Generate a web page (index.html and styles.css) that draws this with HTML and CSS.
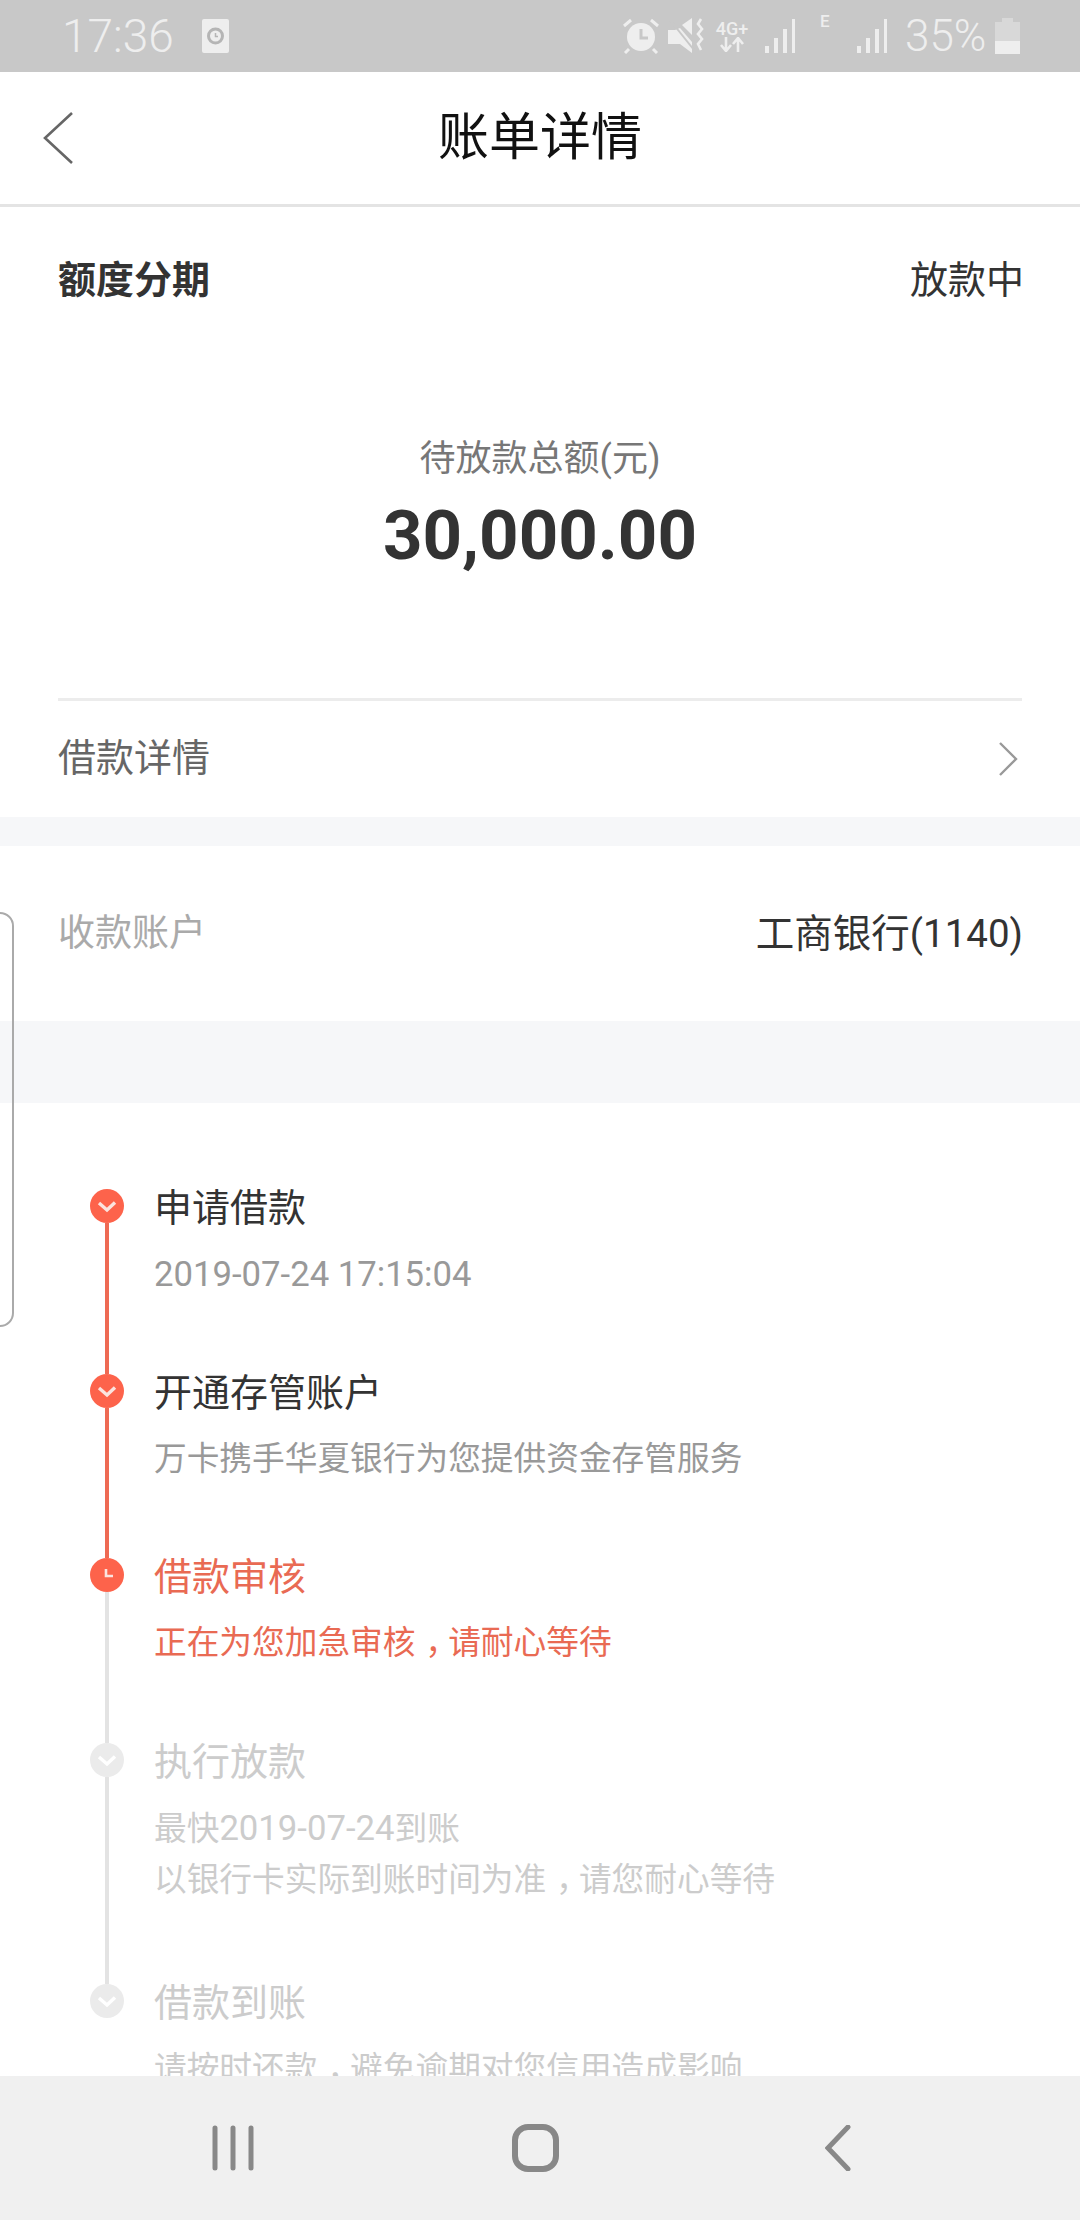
FILE: index.html
```html
<!DOCTYPE html>
<html lang="zh-CN">
<head>
    <meta charset="UTF-8">
    <meta name="viewport" content="width=device-width, initial-scale=1.0">
    <title>账单详情</title>
    <link rel="stylesheet" href="styles.css">
</head>
<body>
    <div class="app">
        <!-- Status bar -->
        <div class="status-bar">
            <div class="status-left">
                <span class="status-time">17:36</span>
                <svg class="status-note" width="27" height="34" viewBox="0 0 27 34">
                    <rect width="27" height="34" rx="2" fill="#eeeeee"/>
                    <circle cx="13.5" cy="17" r="7" fill="none" stroke="#b5b5b5" stroke-width="3"/>
                    <path d="M13.5 14v3.5h2.5" fill="none" stroke="#b5b5b5" stroke-width="1.5"/>
                </svg>
            </div>
            <div class="status-right">
                <svg class="icon-alarm" width="38" height="36" viewBox="0 0 38 36">
                    <circle cx="19" cy="19" r="14" fill="#eeeeee"/>
                    <path d="M19 11v9h7" fill="none" stroke="#c8c8c8" stroke-width="3"/>
                    <path d="M2 8l7-6M36 8l-7-6M7 31l-4 4M31 31l4 4" stroke="#eeeeee" stroke-width="3" fill="none"/>
                </svg>
                <svg class="icon-mute" width="37" height="36" viewBox="0 0 37 36">
                    <path d="M0 12h7l5-2 12 14v11l-12-9H0z" fill="#eeeeee"/>
                    <path d="M14 7l10-7v17z" fill="#eeeeee"/>
                    <path d="M2 2l24 30" stroke="#c8c8c8" stroke-width="2" fill="none"/>
                    <path d="M33 1l-3 5 4 5-4 5 4 5-4 5 3 6" stroke="#eeeeee" stroke-width="2.6" fill="none"/>
                </svg>
                <div class="icon-net">
                    <span class="net-label">4G+</span>
                    <svg width="24" height="15" viewBox="0 0 24 15">
                        <path d="M6 0v13M1 8l5 6 5-6M18 15V2M13 7l5-6 5 6" stroke="#eeeeee" stroke-width="2.6" fill="none"/>
                    </svg>
                </div>
                <svg class="icon-signal" width="32" height="34" viewBox="0 0 32 34">
                    <path d="M1 27h4v7H1zM10 19h4v15h-4zM19 10h4v24h-4zM28 0h3v34h-3z" fill="#eeeeee"/>
                </svg>
                <span class="net-e">E</span>
                <svg class="icon-signal" width="32" height="34" viewBox="0 0 32 34">
                    <path d="M1 27h4v7H1zM10 19h4v15h-4zM19 10h4v24h-4zM28 0h3v34h-3z" fill="#eeeeee"/>
                </svg>
                <span class="status-battery">35%</span>
                <svg class="icon-battery" width="25" height="36" viewBox="0 0 25 36">
                    <path d="M7 0h11v4h7v32H0V4h7z" fill="#d8d8d8"/>
                    <path d="M0 23h25v13H0z" fill="#eeeeee"/>
                </svg>
            </div>
        </div>

        <!-- Title bar -->
        <header class="title-bar">
            <svg class="back-icon" width="30" height="52" viewBox="0 0 30 52">
                <path d="M29 1L2 26l27 25" fill="none" stroke="#666666" stroke-width="2.6"/>
            </svg>
            <h1>账单详情</h1>
        </header>

        <main class="content">
            <section class="summary">
                <div class="summary-head">
                    <strong>额度分期</strong>
                    <span>放款中</span>
                </div>
                <p class="total-label">待放款总额(元)</p>
                <p class="total-amount">30,000.00</p>
                <div class="detail-link">
                    <span>借款详情</span>
                    <svg class="detail-arrow" width="20" height="34" viewBox="0 0 20 34">
                        <path d="M2 1l16 16L2 33" fill="none" stroke="#999999" stroke-width="2.4"/>
                    </svg>
                </div>
            </section>

            <section class="account">
                <span class="account-label">收款账户</span>
                <span class="account-value">工商银行(1140)</span>
            </section>

            <section class="timeline">
                <div class="step done">
                    <div class="rail">
                        <svg class="dot" width="34" height="34" viewBox="0 0 34 34">
                            <circle cx="17" cy="17" r="17" fill="#fd634b"/>
                            <path d="M9 14l8 7 8-7.500" fill="none" stroke="#fbe3de" stroke-width="3.400"/>
                        </svg>
                        <div class="rail-line"></div>
                    </div>
                    <div class="step-body">
                        <h3>申请借款</h3>
                        <p><span class="num">2019-07-24 17:15:04</span></p>
                    </div>
                </div>
                <div class="step done">
                    <div class="rail">
                        <svg class="dot" width="34" height="34" viewBox="0 0 34 34">
                            <circle cx="17" cy="17" r="17" fill="#fd634b"/>
                            <path d="M9 14l8 7 8-7.500" fill="none" stroke="#fbe3de" stroke-width="3.400"/>
                        </svg>
                        <div class="rail-line"></div>
                    </div>
                    <div class="step-body">
                        <h3>开通存管账户</h3>
                        <p>万卡携手华夏银行为您提供资金存管服务</p>
                    </div>
                </div>
                <div class="step current">
                    <div class="rail">
                        <svg class="dot" width="34" height="34" viewBox="0 0 34 34">
                            <circle cx="17" cy="17" r="17" fill="#fd634b"/>
                            <path d="M16 11v7h7" fill="none" stroke="#fbe3de" stroke-width="2.600"/>
                        </svg>
                        <div class="rail-line"></div>
                    </div>
                    <div class="step-body">
                        <h3>借款审核</h3>
                        <p>正在为您加急审核<span class="comma">，</span>请耐心等待</p>
                    </div>
                </div>
                <div class="step todo tall">
                    <div class="rail">
                        <svg class="dot" width="34" height="34" viewBox="0 0 34 34">
                            <circle cx="17" cy="17" r="17" fill="#ebebeb"/>
                            <path d="M9 14l8 7 8-7.500" fill="none" stroke="#ffffff" stroke-width="3.400"/>
                        </svg>
                        <div class="rail-line"></div>
                    </div>
                    <div class="step-body">
                        <h3>执行放款</h3>
                        <p>最快<span class="num">2019-07-24</span>到账<br>以银行卡实际到账时间为准<span class="comma">，</span>请您耐心等待</p>
                    </div>
                </div>
                <div class="step todo">
                    <div class="rail">
                        <svg class="dot" width="34" height="34" viewBox="0 0 34 34">
                            <circle cx="17" cy="17" r="17" fill="#ebebeb"/>
                            <path d="M9 14l8 7 8-7.500" fill="none" stroke="#ffffff" stroke-width="3.400"/>
                        </svg>
                    </div>
                    <div class="step-body">
                        <h3>借款到账</h3>
                        <p>请按时还款<span class="comma">，</span>避免逾期对您信用造成影响</p>
                    </div>
                </div>
            </section>
        </main>

        <!-- Android navigation bar -->
        <nav class="nav-bar">
            <svg width="42" height="46" viewBox="0 0 42 46">
                <path d="M3 3v40M21 3v40M39 3v40" stroke="#888888" stroke-width="5" stroke-linecap="round" fill="none"/>
            </svg>
            <div class="nav-home"></div>
            <svg width="26" height="46" viewBox="0 0 26 46">
                <path d="M23 2L3 23l20 21" fill="none" stroke="#888888" stroke-width="5" stroke-linecap="round"/>
            </svg>
        </nav>

        <!-- Edge tab floating over the page -->
        <div class="edge-tab"></div>
    </div>
</body>
</html>
```

FILE: styles.css
```css
/* Basic Reset */
* {
    margin: 0;
    padding: 0;
    box-sizing: border-box;
}

body {
    font-family: Roboto, "Noto Sans CJK SC", sans-serif;
    background-color: #ffffff;
}

.app {
    position: relative;
    display: flex;
    flex-direction: column;
    width: 1080px;
    height: 2220px;
    overflow: hidden;
}

/* Status bar */
.status-bar {
    display: flex;
    justify-content: space-between;
    align-items: center;
    flex: none;
    height: 72px;
    padding: 0 60px 0 62px;
    background: #c8c8c8;
    color: #eeeeee;
}

.status-left,
.status-right {
    display: flex;
    align-items: center;
}

.status-time {
    font-size: 46px;
    font-weight: 300;
}

.status-note {
    margin-left: 28px;
}

.icon-alarm {
    margin-right: 8px;
}

.icon-mute {
    margin-right: 9px;
}

.icon-net {
    display: flex;
    flex-direction: column;
    align-items: center;
    width: 36px;
    margin-right: 14px;
}

.net-label {
    font-size: 18px;
    font-weight: 500;
    line-height: 17px;
}

.net-e {
    width: 12px;
    margin: 3px 24px 0;
    font-size: 17px;
    font-weight: 500;
    line-height: 17px;
    align-self: flex-start;
}

.status-battery {
    width: 80px;
    margin: 0 10px 0 17px;
    font-size: 44px;
    font-weight: 300;
}

/* Title bar */
.title-bar {
    display: flex;
    align-items: center;
    justify-content: center;
    position: relative;
    flex: none;
    height: 135px;
    padding-bottom: 10px;
    border-bottom: 3px solid #e4e4e4;
    background: #ffffff;
}

.title-bar h1 {
    font-size: 51px;
    font-weight: 400;
    color: #111111;
}

.back-icon {
    position: absolute;
    left: 43px;
    top: 40px;
}

.content {
    flex: 1;
    min-height: 0;
    overflow: hidden;
    background: #f6f7f9;
}

/* Summary card */
.summary {
    padding: 47px 58px 0;
    background: #ffffff;
}

.summary-head {
    display: flex;
    justify-content: space-between;
    margin-right: -2px;
    font-size: 38px;
    line-height: 52px;
    color: #333333;
}

.total-label {
    margin-top: 128px;
    font-size: 36px;
    line-height: 50px;
    text-align: center;
    color: #777777;
}

.total-amount {
    margin-top: 12px;
    font-size: 69px;
    font-weight: 700;
    line-height: 80px;
    text-align: center;
    color: #333333;
}

.detail-link {
    display: flex;
    justify-content: space-between;
    align-items: center;
    height: 119px;
    margin-top: 122px;
    padding: 0 4px 10px 0;
    border-top: 3px solid #ececec;
    font-size: 38px;
    color: #666666;
}

.detail-arrow {
    margin-top: 10px;
}

/* Account row */
.account {
    display: flex;
    justify-content: space-between;
    align-items: center;
    height: 175px;
    margin-top: 29px;
    padding: 0 58px 7px;
    background: #ffffff;
    font-size: 38px;
}

.account-label {
    font-size: 37px;
    color: #aaaaaa;
}

.account-value {
    margin-right: -1px;
    font-size: 38.5px;
    color: #333333;
}

/* Progress timeline */
.timeline {
    margin-top: 82px;
    padding: 86px 0 0 90px;
    background: #ffffff;
}

.step {
    display: flex;
    height: 184.5px;
}

.step.tall {
    height: 241px;
}

.rail {
    display: flex;
    flex-direction: column;
    align-items: center;
    flex: none;
    width: 34px;
}

.dot {
    flex: none;
}

.rail-line {
    flex: 1;
    width: 4px;
    background: #ee6a54;
}

.step-body {
    margin-left: 30px;
    padding-top: 1px;
}

.step-body h3 {
    font-size: 38px;
    font-weight: 400;
    line-height: 36px;
    color: #333333;
}

.step-body p {
    margin-top: 23px;
    font-size: 32.7px;
    line-height: 51px;
    color: #999999;
}

/* Latin digits run a little wider than the CJK text around them */
.num {
    font-size: 34.7px;
}

/* Comma sits in the middle of its cell */
.comma {
    font-feature-settings: "halt";
    padding: 0 0.2em 0 0.3em;
}

.step.current h3,
.step.current p {
    color: #e96a53;
}

.step.current .rail-line,
.step.todo .rail-line {
    background: #e3e3e3;
}

.step.todo h3,
.step.todo p {
    color: #cccccc;
}

/* Navigation bar */
.nav-bar {
    display: flex;
    align-items: center;
    justify-content: space-between;
    flex: none;
    height: 144px;
    padding: 0 229px 0 212px;
    background: #f0f0f0;
}

.nav-home {
    width: 47px;
    height: 48px;
    margin-right: 8px;
    border: 6px solid #888888;
    border-radius: 16px;
}

.edge-tab {
    position: absolute;
    left: -16px;
    top: 912px;
    width: 30px;
    height: 415px;
    border: 2px solid #aaaaaa;
    border-radius: 14px;
}
```
